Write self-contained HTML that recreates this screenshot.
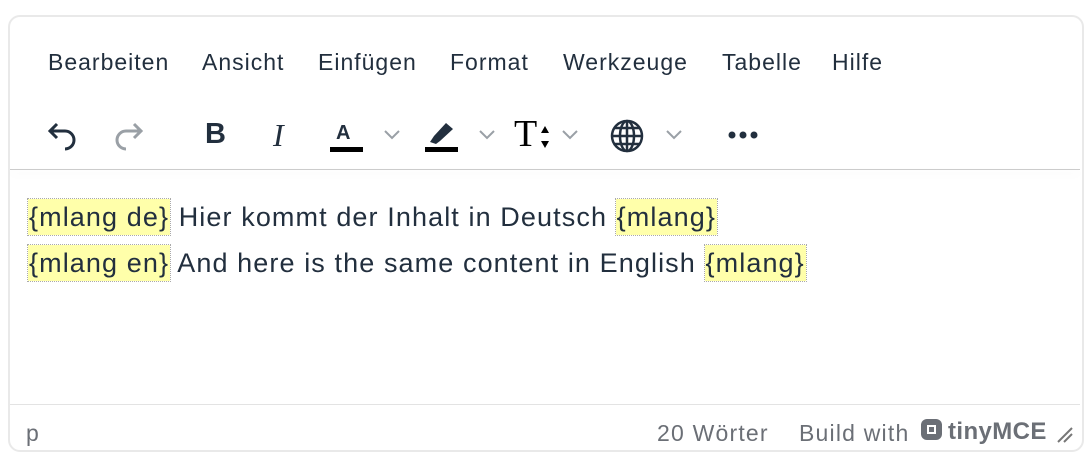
<!DOCTYPE html>
<html><head><meta charset="utf-8"><style>
body{margin:0;width:1090px;height:458px;background:#fff;position:relative;font-family:"Liberation Sans",sans-serif;overflow:hidden}
.frame{position:absolute;left:8px;top:15px;width:1072px;height:433px;border:2px solid #e9e9e9;border-radius:12px}
.m{position:absolute;top:49px;font-size:23px;letter-spacing:1px;color:#222f3e}
.sep{position:absolute;left:10px;width:1070px;top:169px;height:1px;background:#ccc;box-shadow:0 4px 8px rgba(0,0,0,.08)}
.t{position:absolute;font-size:27px;color:#222f3e;white-space:nowrap;letter-spacing:1.1px}
.h{background:#ffffaa;outline:1px dotted #aaa;padding:3px 1px}
.sb{position:absolute;left:10px;width:1070px;top:404px;height:1px;background:#e3e3e3}
.s{position:absolute;top:420px;font-size:23px;letter-spacing:1.2px;color:#6b6f76}
svg{position:absolute}
</style></head><body>
<div class="frame"></div>
<div class="m" style="left:48px">Bearbeiten</div>
<div class="m" style="left:202px">Ansicht</div>
<div class="m" style="left:318px">Einfügen</div>
<div class="m" style="left:450px">Format</div>
<div class="m" style="left:563px">Werkzeuge</div>
<div class="m" style="left:722px">Tabelle</div>
<div class="m" style="left:832px">Hilfe</div>
<svg style="left:45px;top:118px" width="34" height="34" viewBox="0 0 34 34"><path d="M12 6 L5 13 L12 20 M5 13 H20 A9 9 0 0 1 20 31" fill="none" stroke="#222f3e" stroke-width="3"/></svg>
<svg style="left:112px;top:118px" width="34" height="34" viewBox="0 0 34 34"><path d="M22 6 L29 13 L22 20 M29 13 H14 A9 9 0 0 0 14 31" fill="none" stroke="#9aa0a6" stroke-width="3"/></svg>
<div style="position:absolute;left:205px;top:118px;font-size:29px;font-weight:bold;color:#222f3e">B</div>
<div style="position:absolute;left:273px;top:117px;font-size:32px;font-style:italic;font-family:'Liberation Serif',serif;color:#222f3e">I</div>
<div style="position:absolute;left:336px;top:122px;font-size:20px;font-weight:bold;color:#222f3e">A</div>
<div style="position:absolute;left:330px;top:147px;width:33px;height:5px;background:#000"></div>
<svg style="left:382px;top:126px" width="20" height="16"><path d="M3 5 L10 12 L17 5" fill="none" stroke="#9aa0a6" stroke-width="2"/></svg>
<svg style="left:424px;top:118px" width="36" height="36" viewBox="0 0 36 36"><path d="M6 24 L10 18 L22 5 L29 11 L16 23 L12 26 Z" fill="#222f3e"/><rect x="1" y="29" width="33" height="5" fill="#000"/></svg>
<svg style="left:477px;top:126px" width="20" height="16"><path d="M3 5 L10 12 L17 5" fill="none" stroke="#9aa0a6" stroke-width="2"/></svg>
<div style="position:absolute;left:514px;top:112px;font-size:38px;font-family:'Liberation Serif',serif;color:#000">T</div>
<svg style="left:540px;top:126px" width="10" height="26"><path d="M5 0 L9 7 H1Z M5 22 L9 15 H1Z" fill="#000"/></svg>
<svg style="left:560px;top:126px" width="20" height="16"><path d="M3 5 L10 12 L17 5" fill="none" stroke="#9aa0a6" stroke-width="2"/></svg>
<svg style="left:609px;top:118px" width="36" height="36" viewBox="0 0 36 36"><g fill="none" stroke="#222f3e" stroke-width="2.5"><circle cx="18" cy="18" r="15"/><ellipse cx="18" cy="18" rx="7" ry="15"/><path d="M3 18H33M18 3V33M6 10H30M6 26H30"/></g></svg>
<svg style="left:664px;top:126px" width="20" height="16"><path d="M3 5 L10 12 L17 5" fill="none" stroke="#9aa0a6" stroke-width="2"/></svg>
<svg style="left:727px;top:128px" width="34" height="14"><circle cx="5" cy="7" r="3.5" fill="#222f3e"/><circle cx="16" cy="7" r="3.5" fill="#222f3e"/><circle cx="27" cy="7" r="3.5" fill="#222f3e"/></svg>
<div class="sep"></div>
<div class="t" style="left:28px;top:202px"><span class="h">{mlang de}</span> Hier kommt der Inhalt in Deutsch <span class="h">{mlang}</span></div>
<div class="t" style="left:28px;top:248px"><span class="h">{mlang en}</span> And here is the same content in English <span class="h">{mlang}</span></div>
<div class="sb"></div>
<div class="s" style="left:26px">p</div>
<div class="s" style="left:657px">20 Wörter</div>
<div class="s" style="left:799px">Build with</div>
<svg style="left:920px;top:418px" width="24" height="24"><rect x="1" y="1" width="21" height="21" rx="6" fill="#6b6f76"/><rect x="7" y="7" width="9" height="9" fill="#fff"/><rect x="9" y="9" width="5" height="5" fill="#6b6f76"/></svg>
<div class="s" style="left:948px;font-weight:bold;font-size:24px;letter-spacing:0.4px;top:418px">tinyMCE</div>
<svg style="left:1056px;top:426px" width="18" height="18"><path d="M2 16 L16 2 M8 16 L16 8" stroke="#777" stroke-width="2"/></svg>
</body></html>
